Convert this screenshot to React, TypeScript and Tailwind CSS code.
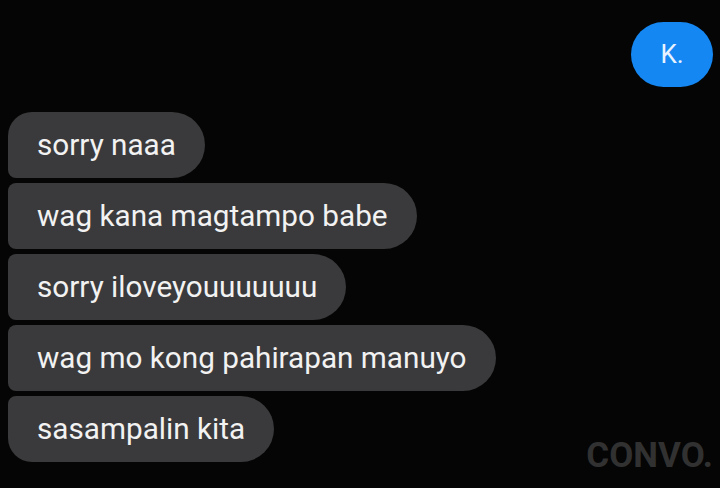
import React from "react";

const messages = [
  "sorry naaa",
  "wag kana magtampo babe",
  "sorry iloveyouuuuuuu",
  "wag mo kong pahirapan manuyo",
  "sasampalin kita",
];

const App = () => {
  return (
    <div
      className="relative w-[720px] h-[488px] overflow-hidden bg-[#050505]"
      style={{ fontFamily: "Roboto, 'Noto Sans', sans-serif" }}
    >
      {/* Sent */}
      <div className="flex justify-end pt-[22px] pr-[7px]">
        <div className="flex items-center justify-center w-[82px] h-[65px] rounded-full bg-[#1487f3] text-[26px] text-[#e8f3ff]">
          K.
        </div>
      </div>

      {/* Received */}
      <div className="flex flex-col items-start gap-[5px] pl-[8px] mt-[25px]">
        {messages.map((m, i) => (
          <div
            key={m}
            className={`flex items-center h-[66px] pl-[29px] pr-[29px] bg-[#3a3a3c] text-[#f2f2f2] text-[29.7px] rounded-r-[33px] ${
              i === 0 ? "rounded-tl-[24px] rounded-bl-[8px]" : i === messages.length - 1 ? "rounded-tl-[8px] rounded-bl-[24px]" : "rounded-l-[8px]"
            }`}
          >
            {m}
          </div>
        ))}
      </div>

      {/* Watermark */}
      <div className="absolute right-[7px] bottom-[6px] text-[35px] font-bold text-[#313131]">
        CONVO.
      </div>
    </div>
  );
};

export default App;
